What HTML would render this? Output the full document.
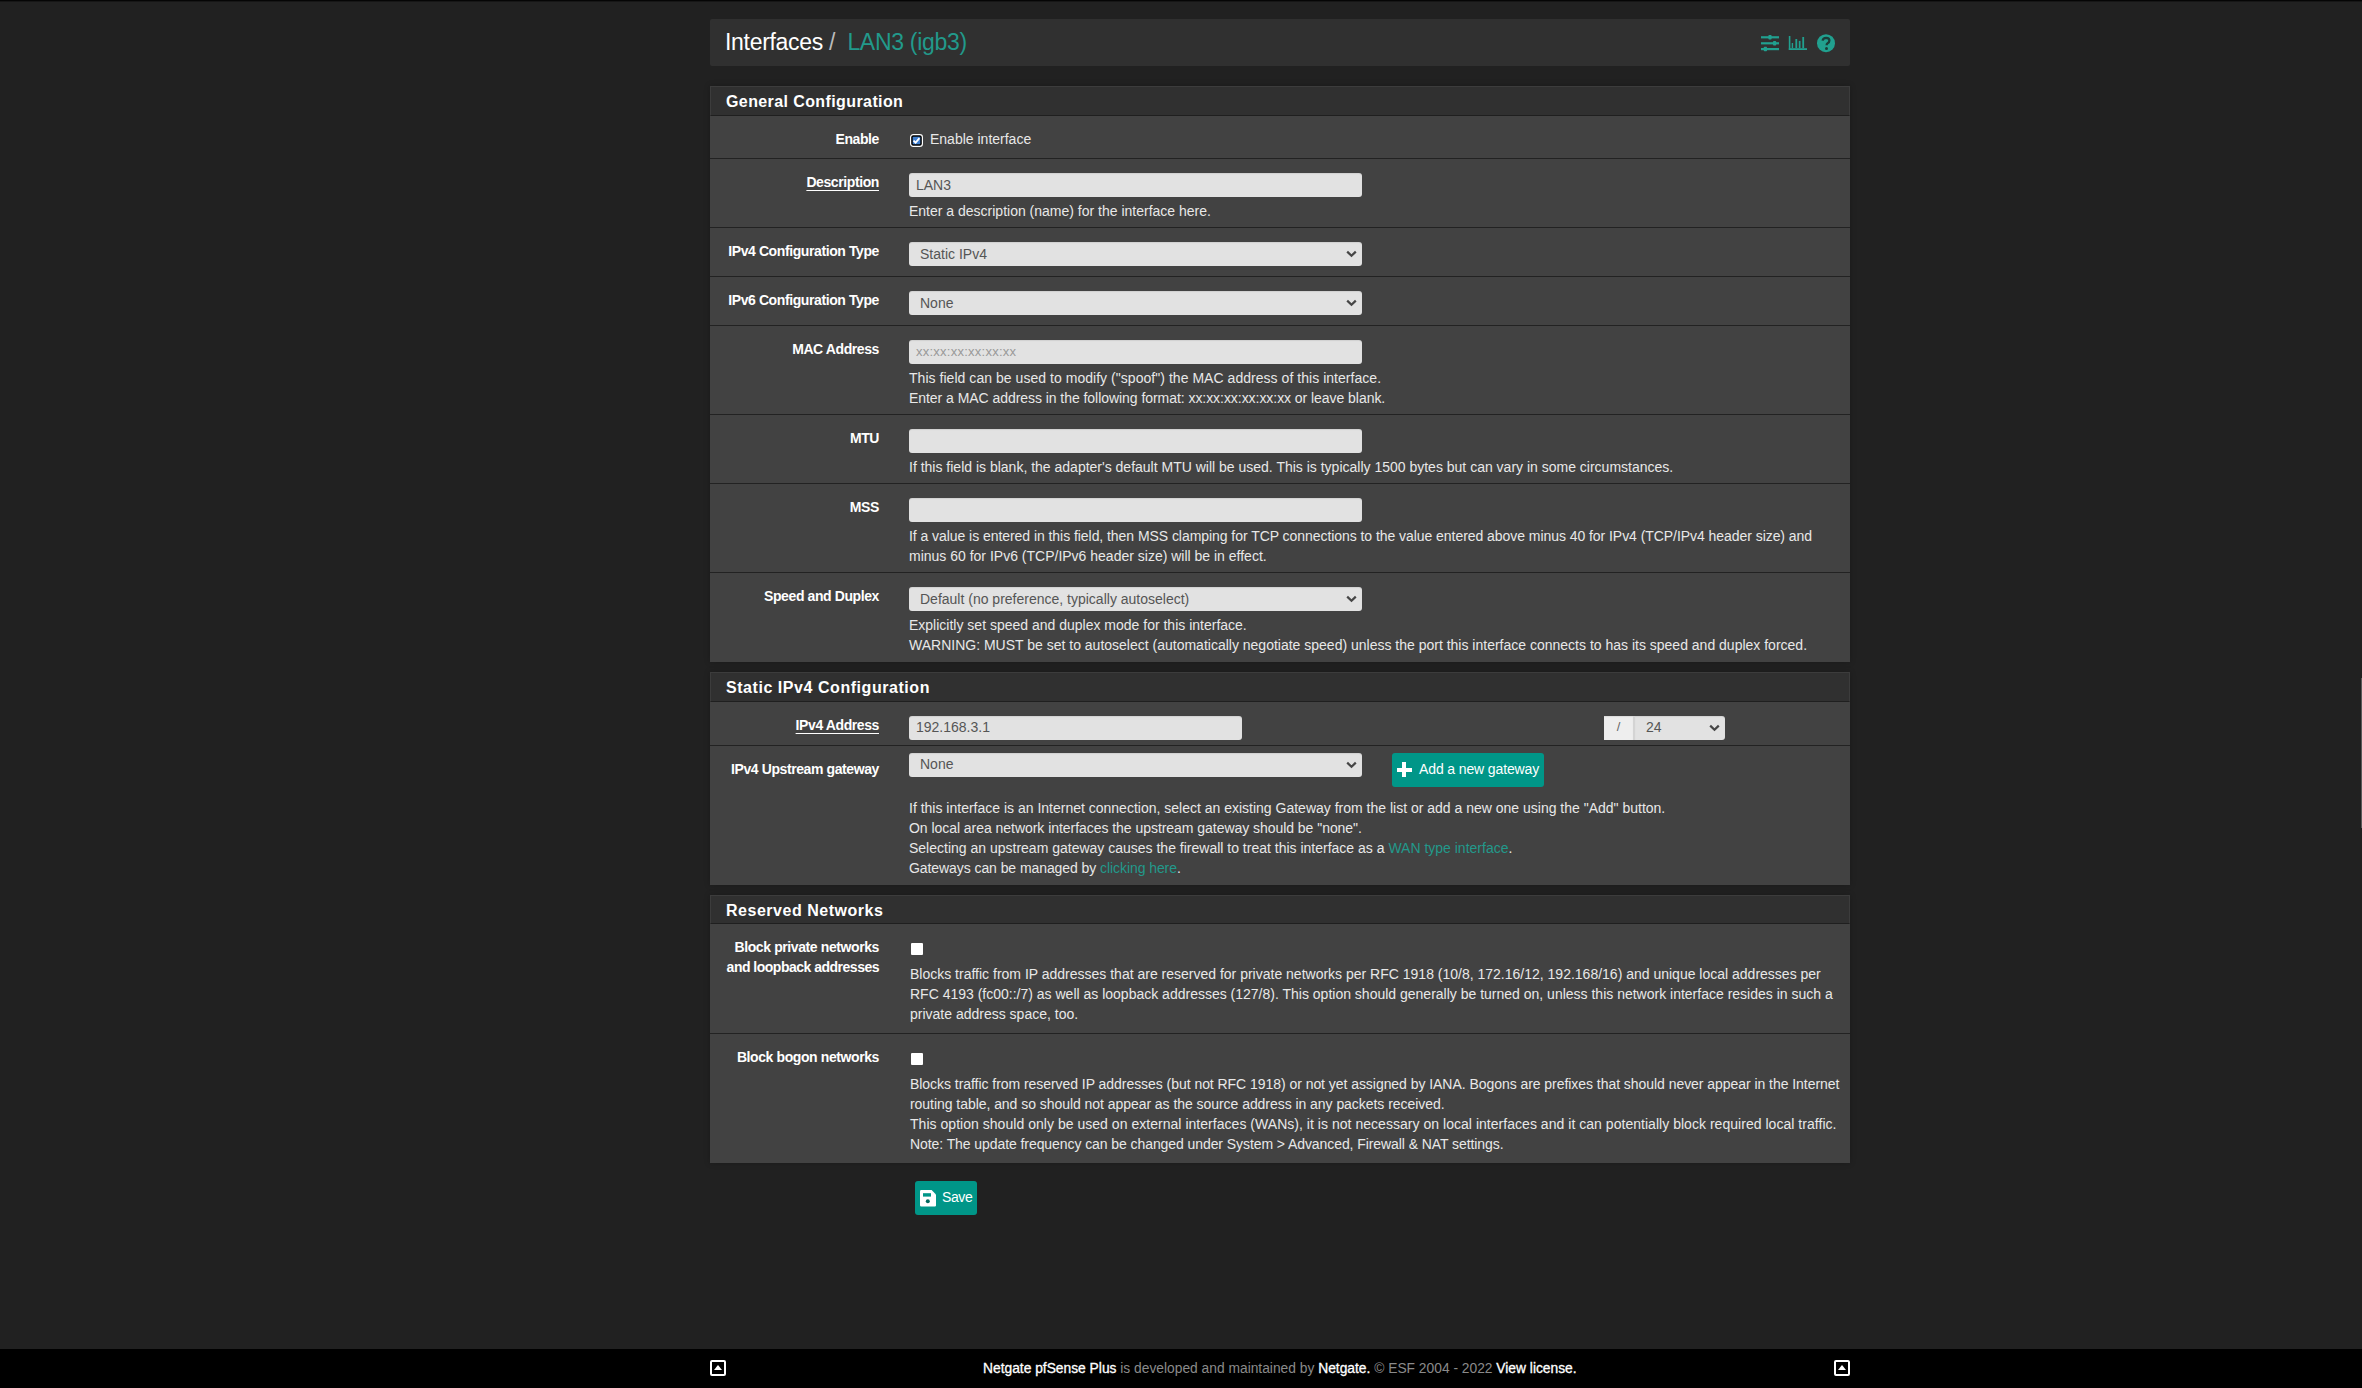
<!DOCTYPE html>
<html><head><meta charset="utf-8">
<style>
*{box-sizing:border-box}
html,body{margin:0;padding:0}
body{width:2362px;height:1388px;overflow:hidden;background:#212121;position:relative;font-family:"Liberation Sans",sans-serif;font-size:14px;color:#e4e4e4}
.topline{position:absolute;left:0;top:0;width:2362px;height:2px;background:linear-gradient(#050505 50%,#161616 50%)}
.abs{position:absolute;white-space:nowrap}
.crumb{position:absolute;left:710px;top:19px;width:1140px;height:47px;background:#303030;border-radius:2px}
.crumb .t{position:absolute;left:15px;top:10px;font-size:23px;color:#fff;letter-spacing:-0.3px}
.panel{position:absolute;left:710px;width:1140px;background:#424242;box-shadow:0 0 6px rgba(0,0,0,.22)}
.ph{height:30px;background:#303030;border:1px solid #3c3c3c;border-bottom:1px solid #1f1f1f;position:relative}
.ph span{position:absolute;left:15px;top:6px;font-size:16px;font-weight:bold;color:#fff;letter-spacing:0.4px}
.row{position:relative;border-top:1px solid #222}
.row:first-of-type{border-top:none}
.lbl{position:absolute;right:971px;font-weight:bold;color:#fff;white-space:nowrap;text-align:right;letter-spacing:-0.4px;line-height:20px}
.lbl.u{text-decoration:underline;text-underline-offset:3px;text-decoration-skip-ink:none}
.inp{position:absolute;left:199px;height:24px;background:#e2e2e2;box-shadow:inset 0 1px 1px rgba(0,0,0,.08);border-radius:3px;color:#555;padding-left:7px;line-height:24px;white-space:nowrap}
.sel{padding-left:11px}
.chev{position:absolute;right:5px;top:8px}
.help{position:absolute;left:199px;line-height:20px;color:#e8e8e8;white-space:nowrap}
.link{color:#22998b}
.cb{position:absolute;width:12px;height:12px;background:#fff;border-radius:1px}

.btn{position:absolute;background:#009688;border-radius:3px;color:#fff;white-space:nowrap}
.plus{position:absolute;left:5px;top:9px;width:14px;height:14px}
.plus:before{content:"";position:absolute;left:5px;top:0;width:4px;height:15px;background:#fff}
.plus:after{content:"";position:absolute;left:0;top:5.5px;width:15px;height:4px;background:#fff}
.footer{position:absolute;left:0;top:1349px;width:2362px;height:39px;background:#000}
.ft{position:absolute;left:983px;top:12px;font-size:13.8px;color:#8a8a8a;white-space:nowrap}
.fi{position:absolute;top:11px;width:16px;height:16px;border:2px solid #fff;border-radius:2px}
.fi:after{content:"";position:absolute;left:2px;top:3px;border-left:4px solid transparent;border-right:4px solid transparent;border-bottom:5px solid #fff}
.fw{color:#fff;-webkit-text-stroke:0.3px #fff}
</style></head><body>
<div class="topline"></div>

<div class="crumb"><div class="t">Interfaces <span style="color:#bbb">/</span>&nbsp; <span style="color:#22998b">LAN3 (igb3)</span></div><svg style="position:absolute;left:1050px;top:15px" width="80" height="24" viewBox="0 0 80 24">
<g fill="#21a08f">
<rect x="1" y="2.2" width="18" height="2.2"/><rect x="8.4" y="1" width="3.2" height="4.6" rx="0.8"/>
<rect x="1" y="8.2" width="18" height="2.2"/><rect x="13" y="7" width="3.2" height="4.6" rx="0.8"/>
<rect x="1" y="14" width="18" height="2.2"/><rect x="3.8" y="12.7" width="3.2" height="4.6" rx="0.8"/>
<rect x="28.8" y="2" width="1.6" height="14"/><rect x="28.8" y="14.2" width="18.2" height="1.8"/>
<rect x="31.7" y="9" width="1.4" height="5"/><rect x="35.4" y="5" width="1.8" height="9"/><rect x="38.8" y="6.9" width="1.7" height="7.1"/><rect x="42.3" y="3" width="1.8" height="11"/>
<circle cx="66" cy="9.2" r="9"/>
</g>
<path d="M62.6 6.6 Q63 3.8 66.2 3.8 Q69.4 3.9 69.4 6.6 Q69.4 8.3 67.6 9.2 Q66.6 9.8 66.6 11.2" fill="none" stroke="#1c3c38" stroke-width="2.3"/>
<circle cx="66.5" cy="14.4" r="1.5" fill="#1c3c38"/>
</svg></div>

<!-- General Configuration -->
<div class="panel" style="top:86px;height:576px">
  <div class="ph"><span>General Configuration</span></div>
  <div class="row" style="height:42px;border-top:none">
    <div class="lbl" style="top:13px">Enable</div>
    <svg style="position:absolute;left:200px;top:18px" width="13" height="13" viewBox="0 0 13 13"><rect x="0.6" y="0.6" width="11.8" height="11.8" rx="2.6" fill="#000" stroke="#fff" stroke-width="1.2"/><rect x="2.7" y="2.7" width="7.6" height="7.6" rx="0.8" fill="#3f7fd0"/><path d="M3.5 6.6 L5.6 8.7 L9.4 4.1" fill="none" stroke="#fff" stroke-width="1.8"/></svg>
    <div class="help" style="left:220px;top:13px">Enable interface</div>
  </div>
  <div class="row" style="height:69px">
    <div class="lbl u" style="top:13px">Description</div>
    <div class="inp" style="top:14px;width:453px">LAN3</div>
    <div class="help" style="top:42px">Enter a description (name) for the interface here.</div>
  </div>
  <div class="row" style="height:49px">
    <div class="lbl" style="top:13px">IPv4 Configuration Type</div>
    <div class="inp sel" style="top:14px;width:453px">Static IPv4<svg class="chev" width="11" height="8" viewBox="0 0 11 8"><path d="M1.2 1.6 L5.5 5.8 L9.8 1.6" fill="none" stroke="#464646" stroke-width="2.2"/></svg></div>
  </div>
  <div class="row" style="height:49px">
    <div class="lbl" style="top:13px">IPv6 Configuration Type</div>
    <div class="inp sel" style="top:14px;width:453px">None<svg class="chev" width="11" height="8" viewBox="0 0 11 8"><path d="M1.2 1.6 L5.5 5.8 L9.8 1.6" fill="none" stroke="#464646" stroke-width="2.2"/></svg></div>
  </div>
  <div class="row" style="height:89px">
    <div class="lbl" style="top:13px">MAC Address</div>
    <div class="inp" style="top:14px;width:453px;color:#999;font-size:13px;letter-spacing:0.25px">xx:xx:xx:xx:xx:xx</div>
    <div class="help" style="top:42px"><span style="letter-spacing:0.04px">This field can be used to modify ("spoof") the MAC address of this interface.</span><br><span style="letter-spacing:-0.05px">Enter a MAC address in the following format: xx:xx:xx:xx:xx:xx or leave blank.</span></div>
  </div>
  <div class="row" style="height:69px">
    <div class="lbl" style="top:13px">MTU</div>
    <div class="inp" style="top:14px;width:453px"></div>
    <div class="help" style="top:42px">If this field is blank, the adapter's default MTU will be used. This is typically 1500 bytes but can vary in some circumstances.</div>
  </div>
  <div class="row" style="height:89px">
    <div class="lbl" style="top:13px">MSS</div>
    <div class="inp" style="top:14px;width:453px"></div>
    <div class="help" style="top:42px"><span style="letter-spacing:-0.053px">If a value is entered in this field, then MSS clamping for TCP connections to the value entered above minus 40 for IPv4 (TCP/IPv4 header size) and</span><br>minus 60 for IPv6 (TCP/IPv6 header size) will be in effect.</div>
  </div>
  <div class="row" style="height:90px">
    <div class="lbl" style="top:13px">Speed and Duplex</div>
    <div class="inp sel" style="top:14px;width:453px">Default (no preference, typically autoselect)<svg class="chev" width="11" height="8" viewBox="0 0 11 8"><path d="M1.2 1.6 L5.5 5.8 L9.8 1.6" fill="none" stroke="#464646" stroke-width="2.2"/></svg></div>
    <div class="help" style="top:42px">Explicitly set speed and duplex mode for this interface.<br>WARNING: MUST be set to autoselect (automatically negotiate speed) unless the port this interface connects to has its speed and duplex forced.</div>
  </div>
</div>

<!-- Static IPv4 Configuration -->
<div class="panel" style="top:672px;height:213px">
  <div class="ph"><span style="letter-spacing:0.55px">Static IPv4 Configuration</span></div>
  <div class="row" style="height:43px;border-top:none">
    <div class="lbl u" style="top:13px">IPv4 Address</div>
    <div class="inp" style="top:14px;width:333px;line-height:22px">192.168.3.1</div>
    <div class="inp" style="left:894px;top:14px;width:31px;background:#eeeeee;border-radius:0;text-align:center;padding-left:0;border-right:2px solid #d4d4d4;line-height:22px;color:#666;font-size:13px">/</div>
    <div class="inp sel" style="left:925px;top:14px;width:90px;border-radius:0 3px 3px 0;line-height:22px">24<svg class="chev" width="11" height="8" viewBox="0 0 11 8"><path d="M1.2 1.6 L5.5 5.8 L9.8 1.6" fill="none" stroke="#464646" stroke-width="2.2"/></svg></div>
  </div>
  <div class="row" style="height:140px">
    <div class="lbl" style="top:13px">IPv4 Upstream gateway</div>
    <div class="inp sel" style="top:7px;width:453px;line-height:22px">None<svg class="chev" width="11" height="8" viewBox="0 0 11 8"><path d="M1.2 1.6 L5.5 5.8 L9.8 1.6" fill="none" stroke="#464646" stroke-width="2.2"/></svg></div>
    <div class="btn" style="left:682px;top:7px;width:152px;height:34px"><span class="plus"></span><span style="position:absolute;left:27px;top:8px;letter-spacing:-0.12px">Add a new gateway</span></div>
    <div class="help" style="top:52px">If this interface is an Internet connection, select an existing Gateway from the list or add a new one using the "Add" button.<br><span style="letter-spacing:-0.042px">On local area network interfaces the upstream gateway should be "none".</span><br>Selecting an upstream gateway causes the firewall to treat this interface as a <span class="link">WAN type interface</span>.<br><span style="letter-spacing:-0.073px">Gateways can be managed by <span class="link">clicking here</span>.</span></div>
  </div>
</div>

<!-- Reserved Networks -->
<div class="panel" style="top:895px;height:268px">
  <div class="ph" style="height:29px"><span style="letter-spacing:0.52px">Reserved Networks</span></div>
  <div class="row" style="height:109px;border-top:none">
    <div class="lbl" style="top:13px">Block private networks<br><span style="letter-spacing:-0.5px">and loopback addresses</span></div>
    <div class="cb" style="left:201px;top:19px"></div>
    <div class="help" style="left:200px;top:40px">Blocks traffic from IP addresses that are reserved for private networks per RFC 1918 (10/8, 172.16/12, 192.168/16) and unique local addresses per<br>RFC 4193 (fc00::/7) as well as loopback addresses (127/8). This option should generally be turned on, unless this network interface resides in such a<br>private address space, too.</div>
  </div>
  <div class="row" style="height:130px">
    <div class="lbl" style="top:13px">Block bogon networks</div>
    <div class="cb" style="left:201px;top:19px"></div>
    <div class="help" style="left:200px;top:40px"><span style="letter-spacing:-0.047px">Blocks traffic from reserved IP addresses (but not RFC 1918) or not yet assigned by IANA. Bogons are prefixes that should never appear in the Internet</span><br><span style="letter-spacing:-0.047px">routing table, and so should not appear as the source address in any packets received.</span><br><span style="letter-spacing:0.033px">This option should only be used on external interfaces (WANs), it is not necessary on local interfaces and it can potentially block required local traffic.</span><br><span style="letter-spacing:-0.076px">Note: The update frequency can be changed under System &gt; Advanced, Firewall &amp; NAT settings.</span></div>
  </div>
</div>

<div class="btn" style="left:915px;top:1181px;width:62px;height:34px"><svg style="position:absolute;left:5px;top:9px" width="16" height="17" viewBox="0 0 16 17"><path d="M1.2 0 H11.6 L16 4.4 V15.6 Q16 16.4 15.2 16.4 H1.2 Q0 16.4 0 15.2 V1.2 Q0 0 1.2 0 Z" fill="#fff"/><rect x="3" y="3.2" width="8" height="3.4" fill="#009688"/><circle cx="7.8" cy="11.2" r="2" fill="#00695f"/></svg><span style="position:absolute;left:27px;top:8px;letter-spacing:-0.4px">Save</span></div>

<div class="footer">
  <div class="fi" style="left:710px"></div>
  <div class="ft"><span class="fw">Netgate pfSense Plus</span> is developed and maintained by <span class="fw">Netgate.</span> © ESF 2004 - 2022 <span class="fw">View license.</span></div>
  <div class="fi" style="left:1834px"></div>
</div>
<div style="position:absolute;left:2361px;top:678px;width:1px;height:150px;background:#5a5a5a"></div>

</body></html>
